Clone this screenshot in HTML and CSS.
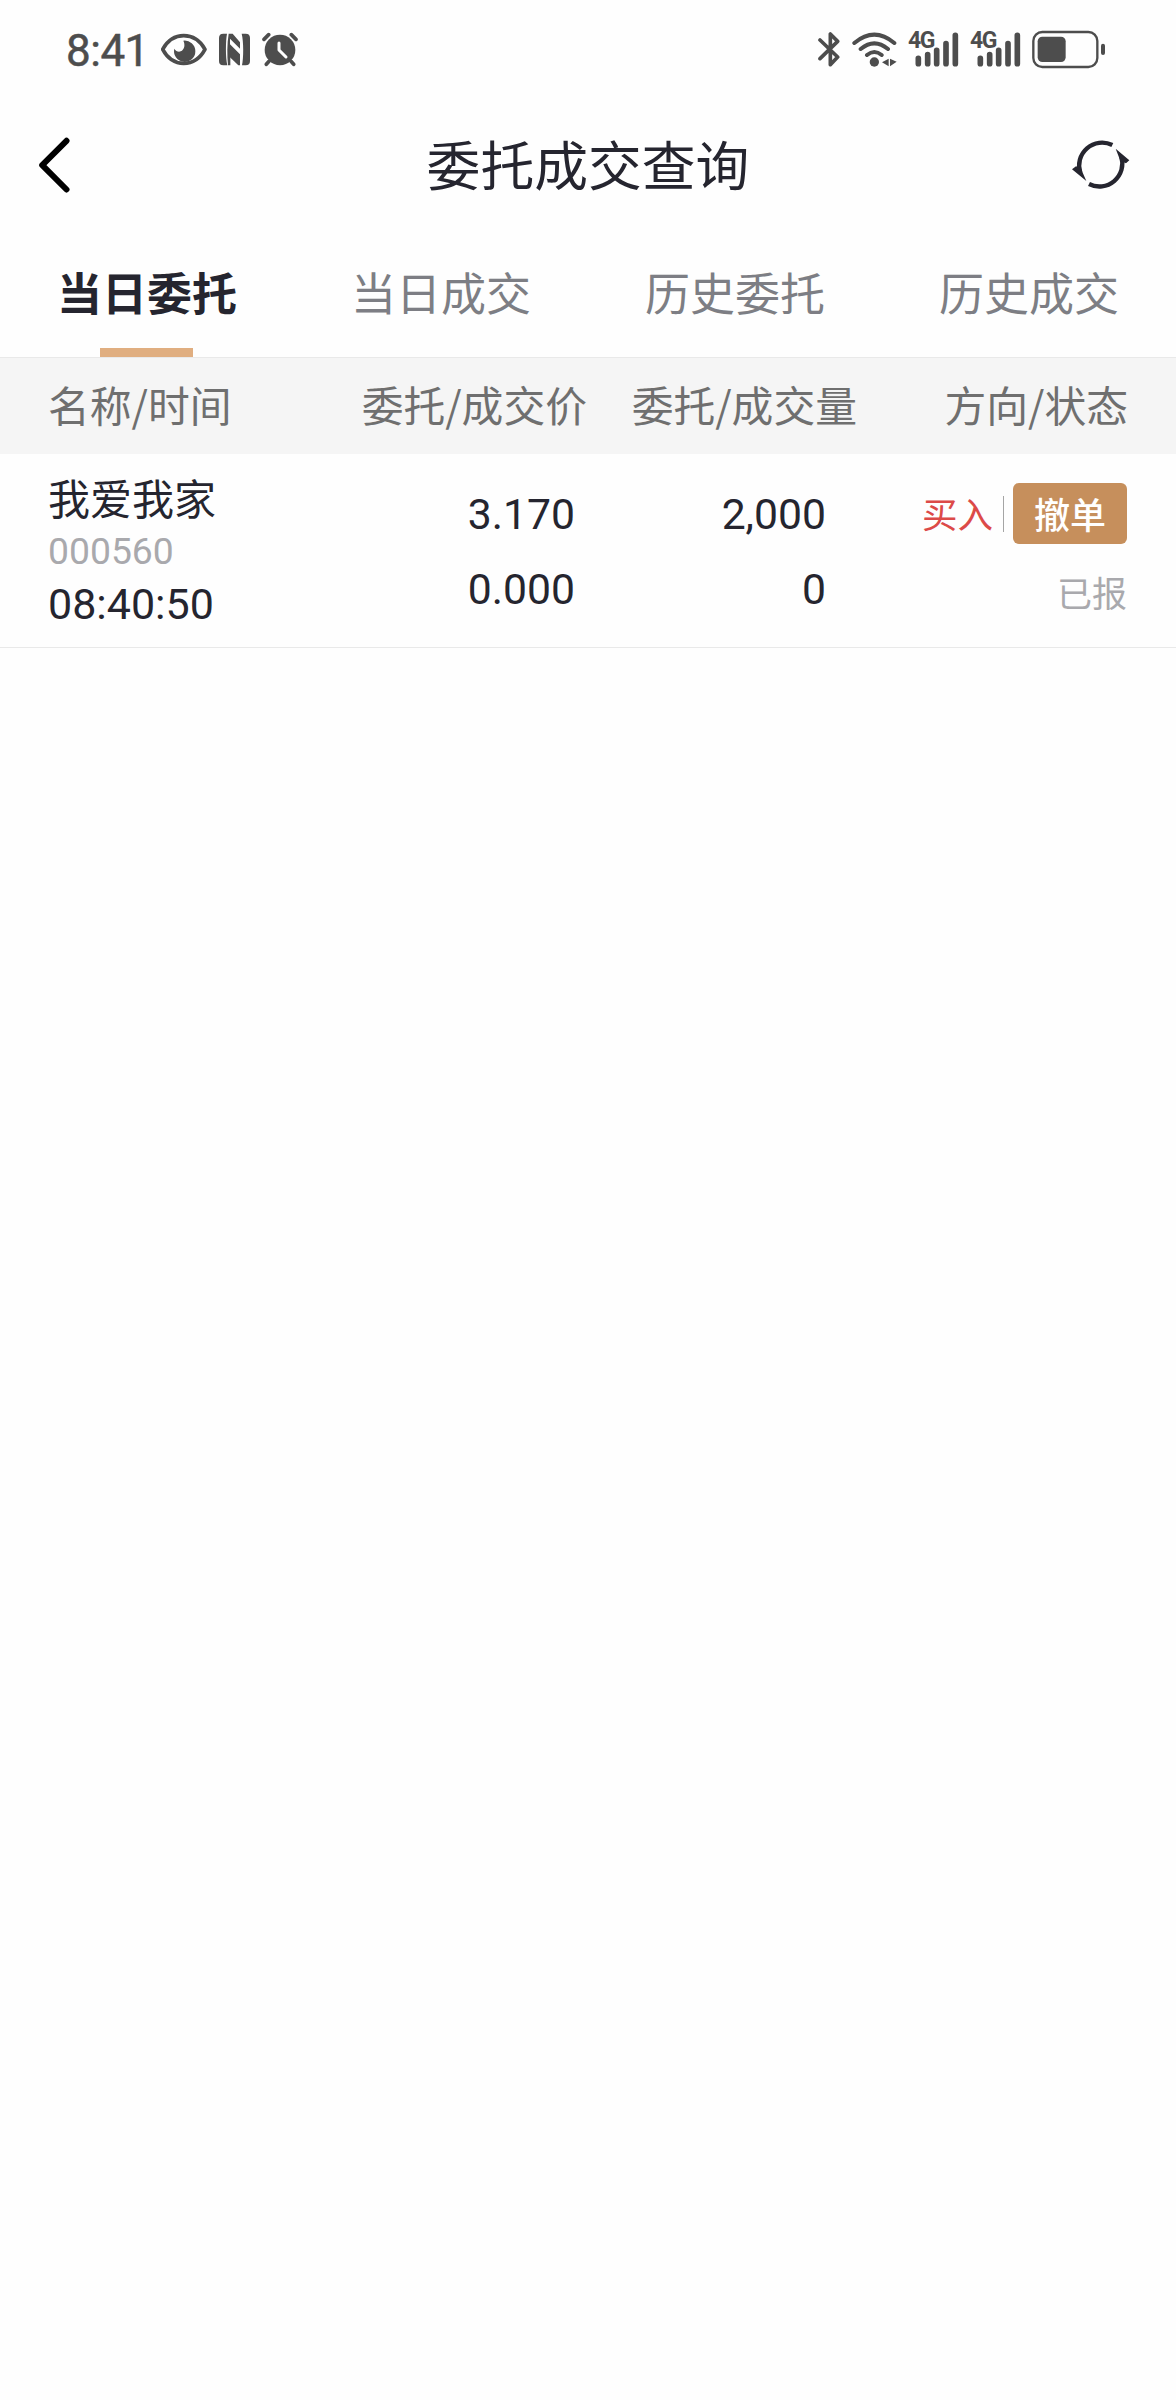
FILE: index.html
```html
<!DOCTYPE html>
<html lang="zh-CN">
<head>
  <meta charset="UTF-8">
  <title>委托成交查询</title>
  <meta name="viewport" content="width=device-width, initial-scale=1">
  <link rel="stylesheet" href="styles.css">
</head>
<body>
  <div class="status-bar">
    <div class="status-left">
      <span class="clock">8:41</span>
      <!-- eye comfort -->
      <svg class="icon-eye" width="46" height="40" viewBox="333 45 138 120">
        <path d="M338 103C352 78 374 62 401 62s50 16 64 41c-14 26-37 42-64 42s-49-16-63-42z" fill="none" stroke="#4d4d4d" stroke-width="11" stroke-linejoin="round"/>
        <path d="M400 77a32 32 0 1 1-27 24c4 7 12 11 19 8 12-5 14-20 8-32z" fill="#4d4d4d"/>
      </svg>
      <!-- nfc -->
      <svg class="icon-nfc" width="31" height="40" viewBox="507 45 93 120">
        <path d="M520 56h11c-4 20-5 70 1 95h-12q-13 0-13-13V69q0-13 13-13z" fill="#4d4d4d"/>
        <path d="M575 56h12q13 0 13 13v69q0 13-13 13h-11c5-22 5-72-1-95z" fill="#4d4d4d"/>
        <path d="M536 56h12l22 26v19l-30-30v17l30 30v29l-29-30v34h-7c-3-30-3-65 2-95z" fill="#4d4d4d"/>
        <path d="M541 94l29 31v26h-5l-26-25z" fill="#4d4d4d"/>
      </svg>
      <!-- alarm -->
      <svg class="icon-alarm" width="36" height="40" viewBox="637 45 108 120">
        <circle cx="691" cy="105" r="46" fill="#4d4d4d"/>
        <path d="M643 73l14-14M739 73l-14-14M658 139l-8 9M724 139l8 9" stroke="#4d4d4d" stroke-width="11" stroke-linecap="round"/>
        <path d="M688 84v21l21 21" fill="none" stroke="#fff" stroke-width="9" stroke-linecap="round" stroke-linejoin="round"/>
      </svg>
    </div>
    <div class="status-right">
      <!-- bluetooth -->
      <svg class="icon-bt" width="22" height="40" viewBox="54 45 66 120">
        <path d="M60 75l53 51-22 23v-34M60 131l53-52-22-22v36" fill="none" stroke="#4d4d4d" stroke-width="11" stroke-linecap="round" stroke-linejoin="round"/>
      </svg>
      <!-- wifi -->
      <svg class="icon-wifi" width="45" height="40" viewBox="155 45 135 120">
        <path d="M162 84q60-50 120 0M181 102q41-34 82 0M200 120q22-18 44 0" fill="none" stroke="#4d4d4d" stroke-width="12" stroke-linecap="round"/>
        <circle cx="222" cy="141" r="14" fill="#4d4d4d"/>
        <path d="M265 131v23l-20-12zM269 131v23l20-14z" fill="#4d4d4d"/>
      </svg>
      <div class="signal">
        <span class="net">4G</span>
        <svg width="51" height="40" viewBox="323 45 153 120">
          <path d="M354 130v16M382 119v27M409 106v40M437 86v60M465 61v85" stroke="#4d4d4d" stroke-width="17" stroke-linecap="round"/>
        </svg>
      </div>
      <div class="signal">
        <span class="net">4G</span>
        <svg width="51" height="40" viewBox="323 45 153 120">
          <path d="M354 130v16M382 119v27M409 106v40M437 86v60M465 61v85" stroke="#4d4d4d" stroke-width="17" stroke-linecap="round"/>
        </svg>
      </div>
      <!-- battery -->
      <svg class="icon-battery" width="74" height="40" viewBox="695 45 222 120">
        <rect x="699" y="51" width="192" height="105" rx="27" fill="none" stroke="#4d4d4d" stroke-width="7"/>
        <rect x="712" y="65" width="84" height="76" rx="14" fill="#4d4d4d"/>
        <path d="M908 92v22" stroke="#4d4d4d" stroke-width="12" stroke-linecap="round"/>
      </svg>
    </div>
  </div>

  <header class="nav">
    <svg class="back" width="34" height="60" viewBox="0 0 34 60">
      <path d="M30.5 5.8L6.2 30.2l24.3 24.3" fill="none" stroke="#000" stroke-width="6" stroke-linecap="round" stroke-linejoin="round"/>
    </svg>
    <h1>委托成交查询</h1>
    <svg class="refresh" width="58" height="52" viewBox="815 86 174 156">
      <path d="M936 104A69 69 0 0 0 840 188M866 221A69 69 0 0 0 963 139" fill="none" stroke="#25252f" stroke-width="13"/>
      <path d="M815 177l12-9 14 5 17 39zM987 150l-10 9-17-8-14-36z" fill="#25252f"/>
    </svg>
  </header>

  <nav class="tabs">
    <a class="tab active">当日委托</a>
    <a class="tab">当日成交</a>
    <a class="tab">历史委托</a>
    <a class="tab">历史成交</a>
  </nav>

  <div class="table-head">
    <span>名称/时间</span>
    <span class="right">委托/成交价</span>
    <span class="right">委托/成交量</span>
    <span class="right">方向/状态</span>
  </div>

  <div class="order">
    <div class="stock">
      <div class="name">我爱我家</div>
      <div class="code">000560</div>
      <div class="time">08:40:50</div>
    </div>
    <div class="num">
      <div>3.170</div>
      <div>0.000</div>
    </div>
    <div class="num qty">
      <div>2,000</div>
      <div>0</div>
    </div>
    <div class="state">
      <div class="action">
        <span class="buy">买入</span>
        <button class="cancel">撤单</button>
      </div>
      <div class="reported">已报</div>
    </div>
  </div>
</body>
</html>
```

FILE: styles.css
```css
* {
  box-sizing: border-box;
}

body {
  margin: 0;
  min-height: 2400px;
  background: #fefefe;
  color: #25252f;
  font-family: "Noto Sans CJK SC", sans-serif;
}

svg {
  display: block;
  flex: none;
}

/* status bar */
.status-bar {
  height: 110px;
  padding: 30px 70px 0 66px;
  display: flex;
  justify-content: space-between;
}

.status-left,
.status-right {
  display: flex;
  height: 40px;
}

.clock {
  width: 95px;
  font-family: Roboto, sans-serif;
  font-size: 44px;
  line-height: 42px;
  letter-spacing: -0.5px;
  color: #4d4d4d;
  -webkit-text-stroke: 0.5px #4d4d4d;
}

.icon-nfc { margin-left: 12px; }
.icon-alarm { margin-left: 12px; }
.icon-wifi { margin-left: 12px; }
.icon-battery { margin-left: 11px; }

.signal {
  position: relative;
  margin-left: 11px;
}

.net {
  position: absolute;
  top: -8px;
  left: 0;
  font-family: Roboto, sans-serif;
  font-size: 23px;
  line-height: 38px;
  letter-spacing: -1.5px;
  font-weight: 700;
  color: #4d4d4d;
}

/* title */
.nav {
  height: 110px;
  padding: 0 46px 0 36px;
  display: flex;
  align-items: center;
  justify-content: space-between;
}

.nav h1 {
  flex: 1;
  margin: 0;
  padding-left: 34px;
  font-size: 53.8px;
  line-height: 100px;
  height: 104px;
  font-weight: 400;
  text-align: center;
}

/* tabs */
.tabs {
  height: 138px;
  display: flex;
  border-bottom: 1px solid #e9e9e9;
}

.tab {
  flex: 1;
  display: flex;
  flex-direction: column;
  align-items: center;
  font-size: 45px;
  line-height: 144px;
  color: #7d7e84;
}

.active {
  color: #25252f;
  font-weight: 700;
}

.active::after {
  content: "";
  flex: none;
  width: 93px;
  height: 9px;
  margin: -16px 1px 0 0;
  background: #e0ae80;
}

/* list */
.table-head,
.order {
  display: grid;
  grid-template-columns: 270px 269px 270px 1fr;
  padding: 0 48px;
}

.table-head {
  height: 96px;
  background: #f5f5f5;
  color: #6f6f6f;
  font-size: 41.8px;
  line-height: 92px;
}

.right {
  text-align: right;
}

.order {
  height: 194px;
  border-bottom: 1px solid #e9e9e9;
}

.stock {
  padding-top: 15px;
}

.name {
  font-size: 42px;
  line-height: 55px;
}

.code,
.time,
.num {
  font-family: Roboto, sans-serif;
}

.code {
  font-size: 37.3px;
  line-height: 54px;
  color: #a9a9ad;
}

.time {
  font-size: 43px;
  line-height: 53px;
}

.num {
  padding: 23px 12px 0 0;
  font-size: 42.7px;
  line-height: 75px;
  text-align: right;
}

.qty {
  padding-right: 31px;
}

.state {
  padding: 29px 1px 0 0;
}

.action {
  display: flex;
  align-items: center;
  justify-content: flex-end;
}

.buy {
  padding-right: 10px;
  margin-right: 9px;
  border-right: 1px solid #a5a5a5;
  color: #dc4a48;
  font-size: 35.5px;
  line-height: 34px;
  height: 36px;
}

.cancel {
  width: 114px;
  height: 61px;
  padding: 0;
  border: 0;
  border-radius: 6px;
  background: #c68f5c;
  color: #fff;
  font: 500 36px/57px "Noto Sans CJK SC", sans-serif;
}

.reported {
  margin-top: 20px;
  font-size: 35px;
  line-height: 55px;
  color: #a9a9ad;
  text-align: right;
}
```
